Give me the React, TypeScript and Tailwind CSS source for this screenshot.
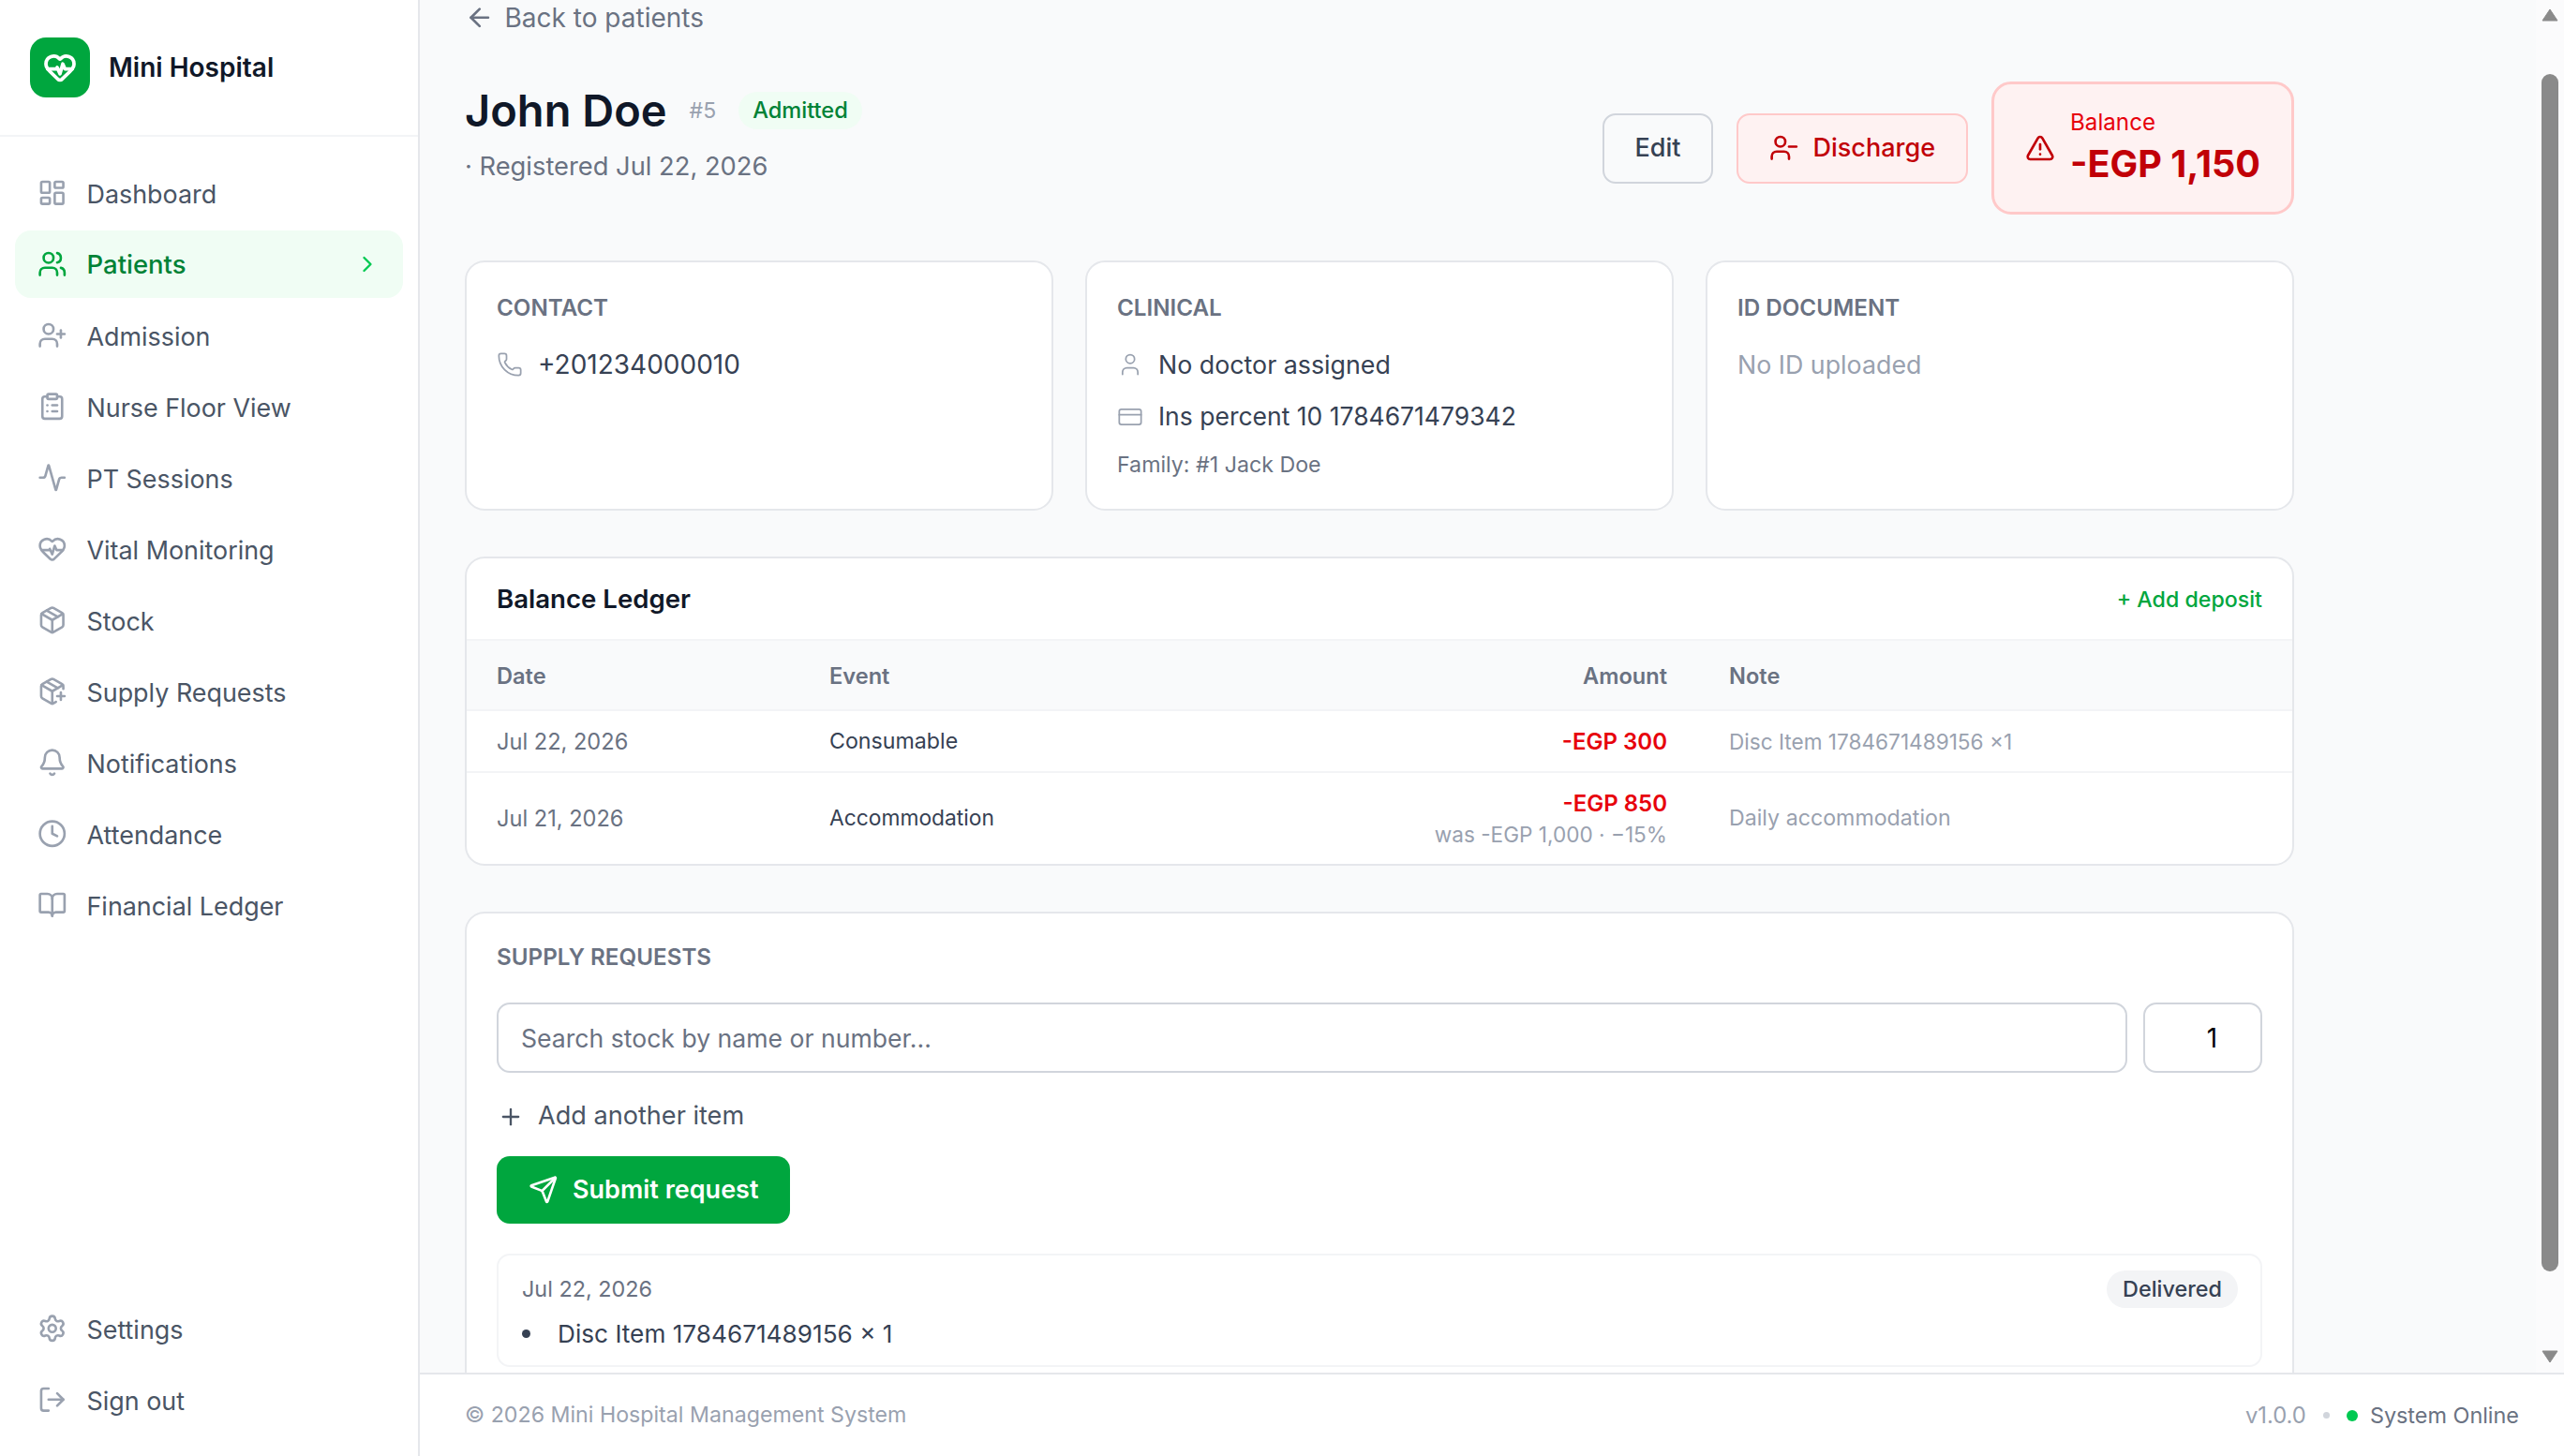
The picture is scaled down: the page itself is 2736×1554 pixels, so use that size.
import React from "react";
import {
  LayoutDashboard, Users, UserPlus, ClipboardList, Activity, HeartPulse, Package, PackagePlus,
  Bell, Clock, BookOpen, Settings, LogOut, ChevronRight, ArrowLeft, UserMinus, TriangleAlert,
  Phone, User, CreditCard, Plus, Send,
} from "lucide-react";

const nav = [
  { label: "Dashboard", Icon: LayoutDashboard },
  { label: "Patients", Icon: Users, active: true },
  { label: "Admission", Icon: UserPlus },
  { label: "Nurse Floor View", Icon: ClipboardList },
  { label: "PT Sessions", Icon: Activity },
  { label: "Vital Monitoring", Icon: HeartPulse },
  { label: "Stock", Icon: Package },
  { label: "Supply Requests", Icon: PackagePlus },
  { label: "Notifications", Icon: Bell },
  { label: "Attendance", Icon: Clock },
  { label: "Financial Ledger", Icon: BookOpen },
];

function NavItem({ label, Icon, active }: { label: string; Icon: any; active?: boolean }) {
  return (
    <div className={`flex h-[72px] items-center gap-[21px] rounded-[17px] px-[24px] ${active ? "bg-green-50 text-[27.5px] font-medium text-green-700" : "text-[26.9px] text-gray-600"}`}>
      <Icon size={31.5} className={active ? "text-green-600" : "text-gray-400"} />
      <span className="flex-1 pt-[2px]">{label}</span>
      {active && <ChevronRight size={28} className="text-green-500" />}
    </div>
  );
}

function Sidebar() {
  return (
    <aside className="flex h-full w-[448px] shrink-0 flex-col border-r-2 border-gray-200 bg-white">
      <div className="flex h-[146px] shrink-0 items-center gap-[20px] border-b-2 border-gray-100 pl-[32px]">
        <div className="flex h-[64px] w-[64px] items-center justify-center rounded-[17px] bg-green-600">
          <HeartPulse size={36} strokeWidth={2.5} className="text-white" />
        </div>
        <span className="text-[28px] font-semibold text-gray-900">Mini Hospital</span>
      </div>
      <nav className="flex flex-1 flex-col gap-[4px] px-[16px] pt-[24px]">
        {nav.map((n) => <NavItem key={n.label} {...n} />)}
      </nav>
      <div className="flex flex-col gap-[4px] px-[16px] pb-[24px]">
        <NavItem label="Settings" Icon={Settings} />
        <NavItem label="Sign out" Icon={LogOut} />
      </div>
    </aside>
  );
}

function Card({ title, children }: { title: string; children?: React.ReactNode }) {
  return (
    <div className="h-[267px] rounded-[21px] border-2 border-gray-200 bg-white px-[32px] pt-[31px]">
      <div className="text-[24.2px] font-semibold uppercase leading-[35px] text-gray-500">{title}</div>
      <div className="mt-[15px]">{children}</div>
    </div>
  );
}

function Ledger() {
  return (
    <div className="overflow-hidden rounded-[21px] border-2 border-gray-200 bg-white">
      <div className="flex h-[88px] items-center justify-between border-b-2 border-gray-100 px-[32px] pt-[2px]">
        <span className="text-[27.6px] font-semibold text-gray-900">Balance Ledger</span>
        <span className="text-[23.2px] font-medium text-green-600">+ Add deposit</span>
      </div>
      <table className="w-full table-fixed text-[23.2px]">
        <colgroup>
          <col className="w-[354px]" />
          <col />
          <col className="w-[420px]" />
          <col className="w-[634px]" />
        </colgroup>
        <thead>
          <tr className="h-[74px] border-b-2 border-gray-100 bg-gray-50 text-left text-[23.6px] font-semibold text-gray-500">
            <th className="px-[32px] pt-[3px] font-semibold">Date</th>
            <th className="px-[33px] pt-[3px] font-semibold">Event</th>
            <th className="px-[33px] pt-[3px] text-right font-semibold">Amount</th>
            <th className="px-[33px] pt-[3px] font-semibold">Note</th>
          </tr>
        </thead>
        <tbody>
          <tr className="h-[66px] border-b-2 border-gray-100">
            <td className="px-[32px] pt-px text-[23.6px] text-gray-500">Jul 22, 2026</td>
            <td className="px-[33px] pt-px text-gray-700">Consumable</td>
            <td className="px-[33px] pt-px text-right text-[24px] font-semibold text-red-600">-EGP 300</td>
            <td className="px-[33px] pt-px text-[22.6px] text-gray-400">Disc Item 1784671489156 ×1</td>
          </tr>
          <tr className="h-[98px]">
            <td className="px-[32px] text-[23.6px] text-gray-500">Jul 21, 2026</td>
            <td className="px-[33px] text-[22.8px] text-gray-700">Accommodation</td>
            <td className="px-[33px] text-right">
              <div className="text-[24px] font-semibold leading-[33px] text-red-600">-EGP 850</div>
              <div className="text-[22.6px] leading-[33px] text-gray-400">was -EGP 1,000 · −15%</div>
            </td>
            <td className="px-[33px] text-gray-400">Daily accommodation</td>
          </tr>
        </tbody>
      </table>
    </div>
  );
}

function SupplyRequests() {
  return (
    <div className="rounded-[21px] border-2 border-gray-200 bg-white px-[32px] pb-[32px] pt-[29px]">
      <div className="text-[24.2px] font-semibold uppercase leading-[35px] text-gray-500">Supply Requests</div>
      <div className="mt-[31px] flex gap-[17px]">
        <input
          readOnly
          placeholder="Search stock by name or number..."
          className="h-[75px] flex-1 rounded-[14px] border-2 border-gray-300 bg-white px-[24px] text-[26.6px] outline-none placeholder:text-gray-500"
        />
        <input
          readOnly
          value="1"
          className="h-[75px] w-[127px] rounded-[14px] border-2 border-gray-300 bg-white pl-[20px] text-center text-[28px] text-black outline-none"
        />
      </div>
      <div className="mt-[29px] flex h-[35px] items-center gap-[15px] pl-px text-[27.1px] text-gray-600">
        <Plus size={28} className="text-gray-600" />
        <span>Add another item</span>
      </div>
      <button className="mt-[25px] flex h-[72px] w-[313px] items-center justify-center gap-[16px] rounded-[14px] bg-green-600 text-[27px] font-semibold text-white">
        <Send size={31.5} />
        Submit request
      </button>
      <div className="mt-[32px] rounded-[14px] border-2 border-gray-100 pb-[14px] pl-[25px] pr-[24px] pt-[16px]">
        <div className="flex items-center justify-between">
          <span className="text-[23.4px] text-gray-500">Jul 22, 2026</span>
          <span className="flex h-[40px] items-center rounded-full bg-gray-100 px-[17px] text-[23.4px] font-medium text-gray-700">Delivered</span>
        </div>
        <ul className="mt-[8px] text-[26.2px] text-gray-700">
          <li className="flex items-center gap-[29px]">
            <span className="h-[9px] w-[9px] rounded-full bg-gray-700" />
            Disc Item 1784671489156 × 1
          </li>
        </ul>
      </div>
    </div>
  );
}

function Scrollbar() {
  return (
    <div className="flex h-full w-[30px] shrink-0 flex-col items-center bg-[#fbfbfc]">
      <svg width="18" height="14" viewBox="0 0 18 14" className="mt-[9px] shrink-0">
        <path d="M9 1 L17 13 H1 Z" fill="#8a8a8a" stroke="#8a8a8a" strokeLinejoin="round" />
      </svg>
      <div className="mt-[56px] h-[1278px] w-[18px] shrink-0 rounded-full bg-[#8a8a8a]" />
      <svg width="18" height="14" viewBox="0 0 18 14" className="mt-[84px] shrink-0">
        <path d="M1 1 H17 L9 13 Z" fill="#8a8a8a" stroke="#8a8a8a" strokeLinejoin="round" />
      </svg>
    </div>
  );
}

function Content() {
  return (
    <div className="flex-1 overflow-hidden pl-[48px]">
      <div className="flex w-[1952px] flex-col">
        <div className="mt-px flex h-[35px] items-center gap-[11px] text-[28px] text-gray-500">
          <ArrowLeft size={31.5} />
          <span>Back to patients</span>
        </div>
        <div className="mt-[51px] flex items-start justify-between">
          <div>
            <div className="flex items-center gap-[24px]">
              <h1 className="text-[47px] font-semibold leading-[62px] text-gray-900">John Doe</h1>
              <span className="text-[23px] text-gray-400">#5</span>
              <span className="flex h-[40px] items-center rounded-full bg-green-50 px-[15px] text-[23.6px] font-medium text-green-700">Admitted</span>
            </div>
            <div className="mt-[9px] text-[27.3px] leading-[40px] text-gray-500">· Registered Jul 22, 2026</div>
          </div>
          <div className="flex items-center gap-[25px]">
            <button className="flex h-[75px] w-[118px] items-center justify-center rounded-[14px] border-2 border-gray-300 text-[27px] font-medium text-gray-700">Edit</button>
            <button className="flex h-[75px] w-[247px] items-center justify-center gap-[15px] rounded-[14px] border-2 border-red-200 bg-red-50 text-[27px] font-medium text-red-700">
              <UserMinus size={31.5} />
              Discharge
            </button>
            <div className="flex h-[142px] w-[323px] items-center gap-[16px] rounded-[21px] border-[3.5px] border-red-200 bg-red-50 pl-[33px]">
              <TriangleAlert size={32} className="text-red-700" />
              <div className="pt-[4px]">
                <div className="text-[24.2px] leading-[30px] text-red-600">Balance</div>
                <div className="text-[39.6px] font-bold leading-[58px] text-red-700">-EGP 1,150</div>
              </div>
            </div>
          </div>
        </div>
        <div className="mt-[49px] grid grid-cols-3 gap-[34px]">
          <Card title="Contact">
            <div className="flex h-[56px] items-center gap-[16px] text-[28px] text-gray-700">
              <Phone size={28} strokeWidth={1.5} className="text-gray-400" />
              +201234000010
            </div>
          </Card>
          <Card title="Clinical">
            <div className="flex h-[56px] items-center gap-[16px] text-[26.8px] text-gray-700">
              <User size={28} strokeWidth={1.5} className="text-gray-400" />
              No doctor assigned
            </div>
            <div className="flex h-[56px] items-center gap-[16px] text-[26.5px] text-gray-700">
              <CreditCard size={28} strokeWidth={1.5} className="text-gray-400" />
              Ins percent 10 1784671479342
            </div>
            <div className="mt-[6px] text-[23.2px] text-gray-500">Family: #1 Jack Doe</div>
          </Card>
          <Card title="ID Document">
            <div className="flex h-[56px] items-center text-[26.8px] text-gray-400">No ID uploaded</div>
          </Card>
        </div>
        <div className="mt-[49px]"><Ledger /></div>
        <div className="mt-[49px]"><SupplyRequests /></div>
      </div>
    </div>
  );
}

function Footer() {
  return (
    <footer className="flex h-[89px] shrink-0 items-center justify-between border-t-2 border-gray-200 bg-white pl-[48px] pr-[48px] text-[23.4px]">
      <span className="text-[23.2px] text-gray-400">© 2026 Mini Hospital Management System</span>
      <div className="flex items-center">
        <span className="text-[23.8px] text-gray-400">v1.0.0</span>
        <span className="ml-[18px] h-[7px] w-[7px] rounded-full bg-gray-300" />
        <span className="ml-[18px] h-[12px] w-[12px] rounded-full bg-green-500" />
        <span className="ml-[13px] text-gray-500">System Online</span>
      </div>
    </footer>
  );
}

export default function App() {
  return (
    <div className="flex h-[1554px] w-[2736px] overflow-hidden bg-gray-50 font-[Inter,sans-serif]">
      <Sidebar />
      <div className="flex min-w-0 flex-1 flex-col">
        <div className="flex min-h-0 flex-1">
          <Content />
          <Scrollbar />
        </div>
        <Footer />
      </div>
    </div>
  );
}
